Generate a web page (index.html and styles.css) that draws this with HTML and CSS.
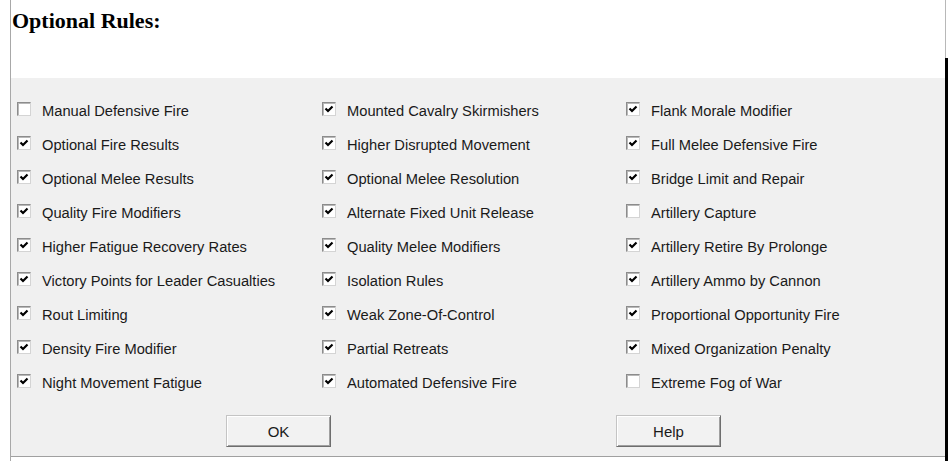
FILE: index.html
```html
<!DOCTYPE html>
<html lang="en">
<head>
<meta charset="UTF-8">
<meta name="viewport" content="width=device-width, initial-scale=1.0">
<title>Optional Rules</title>
<link rel="stylesheet" href="styles.css">
</head>
<body>
<div class="window">
  <div class="title-area">
    <h2>Optional Rules:</h2>
  </div>
  <div class="frame">
    <div class="spacer"></div>
    <div class="panel">
      <div class="rules">
        <label class="rule"><span class="box"></span>Manual Defensive Fire</label>
        <label class="rule"><span class="box checked"></span>Mounted Cavalry Skirmishers</label>
        <label class="rule"><span class="box checked"></span>Flank Morale Modifier</label>

        <label class="rule"><span class="box checked"></span>Optional Fire Results</label>
        <label class="rule"><span class="box checked"></span>Higher Disrupted Movement</label>
        <label class="rule"><span class="box checked"></span>Full Melee Defensive Fire</label>

        <label class="rule"><span class="box checked"></span>Optional Melee Results</label>
        <label class="rule"><span class="box checked"></span>Optional Melee Resolution</label>
        <label class="rule"><span class="box checked"></span>Bridge Limit and Repair</label>

        <label class="rule"><span class="box checked"></span>Quality Fire Modifiers</label>
        <label class="rule"><span class="box checked"></span>Alternate Fixed Unit Release</label>
        <label class="rule"><span class="box"></span>Artillery Capture</label>

        <label class="rule"><span class="box checked"></span>Higher Fatigue Recovery Rates</label>
        <label class="rule"><span class="box checked"></span>Quality Melee Modifiers</label>
        <label class="rule"><span class="box checked"></span>Artillery Retire By Prolonge</label>

        <label class="rule"><span class="box checked"></span>Victory Points for Leader Casualties</label>
        <label class="rule"><span class="box checked"></span>Isolation Rules</label>
        <label class="rule"><span class="box checked"></span>Artillery Ammo by Cannon</label>

        <label class="rule"><span class="box checked"></span>Rout Limiting</label>
        <label class="rule"><span class="box checked"></span>Weak Zone-Of-Control</label>
        <label class="rule"><span class="box checked"></span>Proportional Opportunity Fire</label>

        <label class="rule"><span class="box checked"></span>Density Fire Modifier</label>
        <label class="rule"><span class="box checked"></span>Partial Retreats</label>
        <label class="rule"><span class="box checked"></span>Mixed Organization Penalty</label>

        <label class="rule"><span class="box checked"></span>Night Movement Fatigue</label>
        <label class="rule"><span class="box checked"></span>Automated Defensive Fire</label>
        <label class="rule"><span class="box"></span>Extreme Fog of War</label>
      </div>
      <div class="buttons">
        <button class="btn ok">OK</button>
        <button class="btn help">Help</button>
      </div>
    </div>
    <div class="below"></div>
  </div>
</div>

<script>
  // draw the check mark into every checked box
  document.querySelectorAll('.box.checked').forEach(function (box) {
    box.innerHTML = '<svg width="12" height="12" viewBox="0 0 12 12"><path d="M2.5 5.5 L5 8 L9.5 3.5" fill="none" stroke="#000" stroke-width="2.2"/></svg>';
  });
</script>
</body>
</html>
```

FILE: styles.css
```css
body {
  margin: 0;
  padding: 0;
  background-color: #fff;
  font-family: "Liberation Sans", Arial, sans-serif;
  color: #1a1a1a;
}
.window {
  margin-left: 10px;
  width: 937px;
  height: 461px;
  border-left: 1px solid #a8a8a8;
  overflow: hidden;
}
.title-area {
  height: 58px;
  margin-right: 2px;
  border-right: 1px solid #b8b8b8;
  box-sizing: border-box;
}
h2 {
  margin: 0;
  padding: 8px 0 0 1px;
  font-family: "Liberation Serif", "Times New Roman", serif;
  font-weight: bold;
  font-size: 22px;
  line-height: 25px;
  color: #000;
}
.frame {
  border-right: 3px solid #000;
}
.spacer {
  height: 20px;
}
.panel {
  background-color: #f0f0f0;
  border-bottom: 1px solid #a0a0a0;
  padding: 16px 0 9px 6px;
}
.rules {
  display: grid;
  grid-template-columns: 305px 304px 1fr;
  grid-auto-rows: 34px;
}
.rule {
  display: flex;
  align-items: center;
  font-size: 14.7px;
  line-height: 34px;
  white-space: nowrap;
}
.box {
  width: 12px;
  height: 12px;
  margin: 0 11px 5px 0;
  background-color: #fff;
  border: 1px solid;
  border-color: #8c8c8c #d4d4d4 #d4d4d4 #8c8c8c;
  box-shadow: inset 1px 1px 0 #b8b8b8;
  display: flex;
  align-items: center;
  justify-content: center;
  flex-shrink: 0;
}
.box svg {
  display: block;
}
.buttons {
  display: flex;
  margin-top: 15px;
}
.btn {
  width: 105px;
  height: 32px;
  padding: 0;
  font-family: "Liberation Sans", Arial, sans-serif;
  font-size: 15px;
  color: #1a1a1a;
  background-color: #f2f2f2;
  border: 1px solid;
  border-color: #c4c4c4 #6e6e6e #6e6e6e #c4c4c4;
  box-shadow: inset 1px 1px 0 #fff, inset -1px -1px 0 #a0a0a0;
}
.ok {
  margin-left: 209px;
}
.help {
  margin-left: 285px;
}
.below {
  height: 10px;
}
```
